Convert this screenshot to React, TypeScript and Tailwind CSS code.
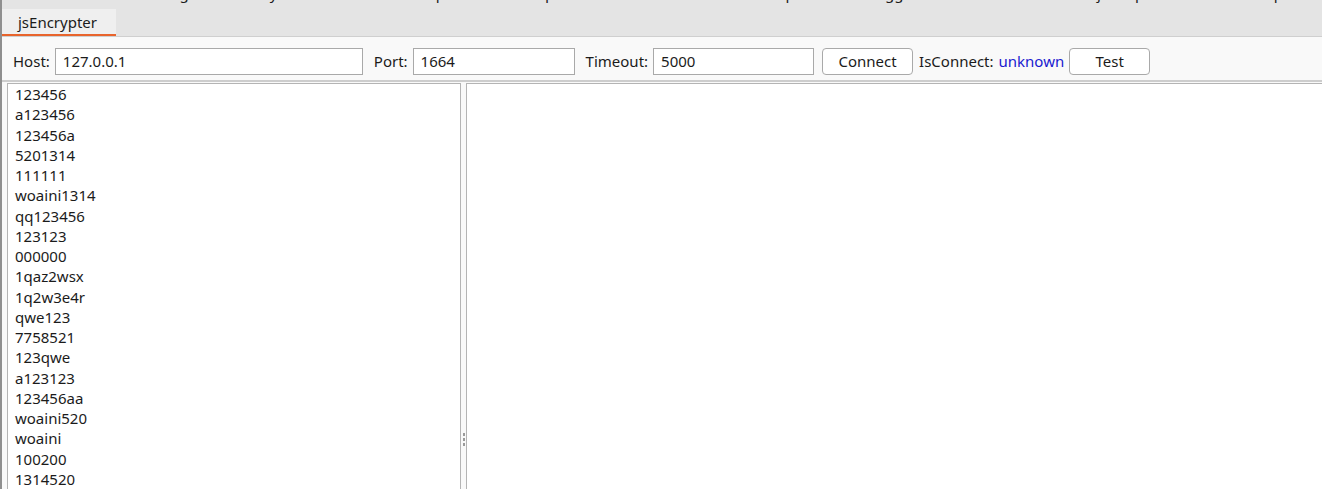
const topTabs = [
  { label: 'Dashboard', w: 'w-[140px]' },
  { label: 'Target', w: 'w-[80px]' },
  { label: 'Proxy', w: 'w-[80px]' },
  { label: 'Intruder', w: 'w-[100px]' },
  { label: 'Repeater', w: 'w-[105px]' },
  { label: 'Sequencer', w: 'w-[130px]' },
  { label: 'Decoder', w: 'w-[100px]' },
  { label: 'Comparer', w: 'w-[115px]' },
  { label: 'Logger', w: 'w-[90px]' },
  { label: 'Extender', w: 'w-[115px]' },
  { label: 'Project options', w: 'w-[155px]' },
  { label: 'User options', w: 'w-[110px]' },
];

const passwords = [
  '123456', 'a123456', '123456a', '5201314', '111111', 'woaini1314', 'qq123456',
  '123123', '000000', '1qaz2wsx', '1q2w3e4r', 'qwe123', '7758521', '123qwe',
  'a123123', '123456aa', 'woaini520', 'woaini', '100200', '1314520',
];

function Field({ label, value, width }: { label: string; value: string; width: string }) {
  return (
    <>
      <span className="mr-[5px]">{label}</span>
      <div className={`${width} h-[27px] bg-white border border-[#a9a9a9] flex items-center px-[7px] mr-[11px]`}>
        {value}
      </div>
    </>
  );
}

export default function App() {
  return (
    <div className="h-[489px] w-[1322px] overflow-hidden bg-[#f9f9f9] text-[15px] text-[#1b1b1b] flex flex-col border-l-2 border-[#8f8f8f] font-['Noto_Sans','Liberation_Sans',sans-serif]">
      {/* Burp tab strip, upper row scrolled out of view */}
      <div className="bg-[#e4e4e4] h-[37px] border-b border-[#cfcfcf] flex flex-col">
        <div className="h-[4px] overflow-hidden">
          <div className="flex -mt-[17px] pl-[16px]">
            {topTabs.map((t) => (
              <span key={t.label} className={`${t.w} shrink-0 leading-[20px]`}>{t.label}</span>
            ))}
          </div>
        </div>
        <div className="flex pt-[5px]">
          <div className="w-[114px] h-[27px] bg-[#efefef] border-b-2 border-[#e8642c] flex items-center pl-[16px] pt-[2px]">
            jsEncrypter
          </div>
        </div>
      </div>

      {/* Connection toolbar */}
      <div className="h-[45px] flex items-start pl-[11px] pt-[11px] border-b-2 border-[#cdcdcd]">
        <div className="flex items-center">
          <Field label="Host:" value="127.0.0.1" width="w-[308px]" />
          <Field label="Port:" value="1664" width="w-[162px]" />
          <Field label="Timeout:" value="5000" width="w-[161px]" />
          <button className="w-[91px] h-[27px] -ml-[3px] bg-white border border-[#a9a9a9] rounded-[4px] mr-[6px]">Connect</button>
          <span className="mr-[5px]">IsConnect:</span>
          <span className="text-[#1a1ad0] mr-[5px]">unknown</span>
          <button className="w-[81px] h-[27px] bg-white border border-[#a9a9a9] rounded-[4px]">Test</button>
        </div>
      </div>

      {/* Split pane */}
      <div className="flex flex-1 min-h-0 pt-[1px]">
        <div className="w-[454px] ml-[5px] bg-white border-l border-t border-r border-[#b4b4b4] pl-[7px] leading-[20.25px]">
          {passwords.map((p) => (
            <div key={p}>{p}</div>
          ))}
        </div>
        <div className="w-[5px] flex flex-col items-center justify-end pb-[43px] gap-[2px]">
          <span className="w-[2px] h-[3px] bg-[#9a9a9a]" />
          <span className="w-[2px] h-[3px] bg-[#9a9a9a]" />
          <span className="w-[2px] h-[3px] bg-[#9a9a9a]" />
        </div>
        <div className="flex-1 bg-white border-l border-t border-[#b4b4b4]" />
      </div>
    </div>
  );
}
